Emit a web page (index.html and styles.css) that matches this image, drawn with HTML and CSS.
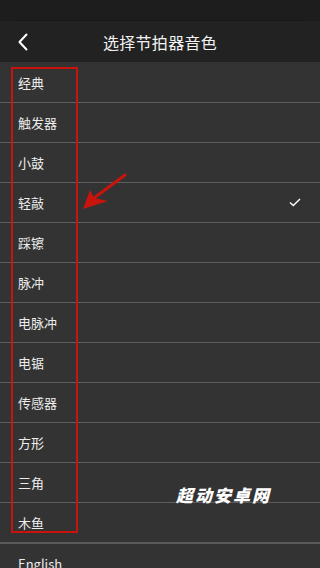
FILE: index.html
```html
<!DOCTYPE html>
<html lang="zh">
<head>
<meta charset="utf-8">
<link rel="stylesheet" href="styles.css">
</head>
<body>
<div class="screen">
  <div class="statusbar"><div class="statusline"></div></div>
  <div class="header">
    <svg class="back" width="12" height="18" viewBox="0 0 12 18"><path d="M9.5 1.5 L2.5 9 L9.5 16.5" fill="none" stroke="#fff" stroke-width="2" stroke-linecap="round" stroke-linejoin="round"/></svg>
    <div class="title">选择节拍器音色</div>
  </div>
  <ul class="list">
    <li class="row">经典</li>
    <li class="row">触发器</li>
    <li class="row">小鼓</li>
    <li class="row">轻敲<svg class="check" width="12" height="9" viewBox="0 0 12 9"><path d="M1 4.5 L4.3 7.5 L11 1" fill="none" stroke="#fff" stroke-width="1.4"/></svg></li>
    <li class="row">踩镲</li>
    <li class="row">脉冲</li>
    <li class="row">电脉冲</li>
    <li class="row">电锯</li>
    <li class="row">传感器</li>
    <li class="row">方形</li>
    <li class="row">三角</li>
    <li class="row last">木鱼</li>
    <li class="row">English</li>
  </ul>
  <div class="redbox"></div>
  <svg class="arrow" width="60" height="50" viewBox="0 0 60 50"><path d="M47 3 L12 29" stroke="#c8140c" stroke-width="3" stroke-linecap="round"/><path d="M5 37 L12 18 L16 26 L30 29 Z" fill="#c8140c"/></svg>
  <div class="watermark">超动安卓网</div>
</div>
</body>
</html>
```

FILE: styles.css
```css
html, body {
  margin: 0;
  padding: 0;
  background: #333333;
}
.screen {
  position: relative;
  width: 320px;
  height: 568px;
  overflow: hidden;
  font-family: "Noto Sans CJK SC", "Noto Sans", sans-serif;
  color: #ececec;
}
.statusbar {
  height: 21px;
  background: #1d1d1d;
  display: flex;
  align-items: flex-end;
  justify-content: center;
}
.statusline {
  width: 290px;
  height: 1px;
  background: #181818;
}
.header {
  height: 41px;
  background: #222222;
  display: flex;
  align-items: center;
  justify-content: center;
  position: relative;
}
.back {
  position: absolute;
  left: 17px;
  top: 12px;
}
.title {
  font-size: 16px;
  color: #f2f2f2;
  letter-spacing: 0.3px;
}
.list {
  list-style: none;
  margin: 0;
  padding: 0;
}
.row {
  box-sizing: border-box;
  height: 40px;
  border-bottom: 1px solid #5e5e5e;
  display: flex;
  align-items: center;
  justify-content: space-between;
  padding: 0 19px 0 18px;
  font-size: 13px;
  color: #ececec;
}
.row:first-child {
  height: 41px;
}
.row.last {
  border-bottom: 2px solid #5a5a5a;
  height: 41px;
}
.redbox {
  position: absolute;
  left: 11px;
  top: 67px;
  width: 63px;
  height: 462px;
  border: 2px solid #c8140c;
}
.arrow {
  position: absolute;
  left: 78px;
  top: 172px;
}
.watermark {
  position: absolute;
  left: 176px;
  top: 482px;
  font-size: 17px;
  font-weight: 900;
  font-style: italic;
  color: #ffffff;
  letter-spacing: 2px;
}
```
